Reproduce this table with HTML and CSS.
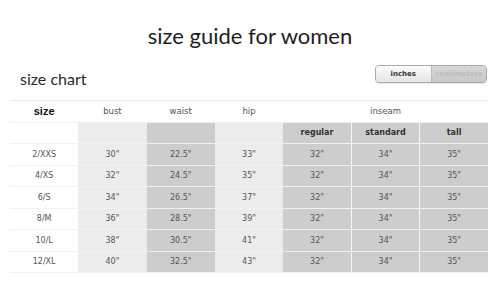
FILE: index.html
```html
<!DOCTYPE html>
<html lang="en">
<head>
  <meta charset="UTF-8" />
  <title>size guide for women</title>
  <link rel="stylesheet" href="styles.css">
</head>
<body>
  <h1 class="page-title">size guide for women</h1>

  <div class="chart-head">
    <h2>size chart</h2>
    <div class="unit-toggle">
      <span class="unit active">inches</span>
      <span class="unit">centimeters</span>
    </div>
  </div>

  <table class="size-table">
    <thead>
      <tr class="top-row">
        <th class="size-col">size</th>
        <th>bust</th>
        <th>waist</th>
        <th>hip</th>
        <th colspan="3">inseam</th>
      </tr>
      <tr class="sub-row">
        <td class="size-col"></td>
        <td class="light"></td>
        <td class="dark"></td>
        <td class="light"></td>
        <th class="dark">regular</th>
        <th class="dark">standard</th>
        <th class="dark">tall</th>
      </tr>
    </thead>
    <tbody>
      <tr><td class="size-col">2/XXS</td><td class="light">30"</td><td class="dark">22.5"</td><td class="light">33"</td><td class="dark">32"</td><td class="dark">34"</td><td class="dark">35"</td></tr>
      <tr><td class="size-col">4/XS</td><td class="light">32"</td><td class="dark">24.5"</td><td class="light">35"</td><td class="dark">32"</td><td class="dark">34"</td><td class="dark">35"</td></tr>
      <tr><td class="size-col">6/S</td><td class="light">34"</td><td class="dark">26.5"</td><td class="light">37"</td><td class="dark">32"</td><td class="dark">34"</td><td class="dark">35"</td></tr>
      <tr><td class="size-col">8/M</td><td class="light">36"</td><td class="dark">28.5"</td><td class="light">39"</td><td class="dark">32"</td><td class="dark">34"</td><td class="dark">35"</td></tr>
      <tr><td class="size-col">10/L</td><td class="light">38"</td><td class="dark">30.5"</td><td class="light">41"</td><td class="dark">32"</td><td class="dark">34"</td><td class="dark">35"</td></tr>
      <tr><td class="size-col">12/XL</td><td class="light">40"</td><td class="dark">32.5"</td><td class="light">43"</td><td class="dark">32"</td><td class="dark">34"</td><td class="dark">35"</td></tr>
    </tbody>
  </table>
</body>
</html>
```

FILE: styles.css
```css
body {
  margin: 0;
  background-color: #fff;
  color: #222;
  font-family: 'Lato', sans-serif;
  width: 500px;
  height: 287px;
  overflow: hidden;
}

/* Title */
.page-title {
  margin: 0;
  padding-top: 23px;
  font-size: 22px;
  font-weight: 400;
  line-height: 26px;
  text-align: center;
  color: #1e1e1e;
}

/* Chart heading + unit switch */
.chart-head {
  display: flex;
  justify-content: space-between;
  align-items: center;
  margin: 13px 13px 0 20px;
  height: 36px;
}

.chart-head h2 {
  margin: -4px 0 0;
  font-size: 16px;
  font-weight: 400;
  color: #2a2a2a;
}

.unit-toggle {
  display: flex;
  width: 110px;
  height: 16px;
  border: 1px solid #aaa;
  border-radius: 4px;
  overflow: hidden;
  margin-top: -12px;
  box-shadow: 0 1px 1px rgba(0,0,0,0.1);
}

.unit {
  flex: 1;
  font-family: 'DejaVu Sans', sans-serif;
  font-size: 7px;
  font-weight: 700;
  line-height: 16px;
  text-align: center;
  color: #bbb;
  background: linear-gradient(#d6d6d6, #c8c8c8);
}

.unit.active {
  color: #333;
  background: linear-gradient(#fbfbfb, #e4e4e4);
  border-right: 1px solid #bbb;
}

/* Table */
.size-table {
  margin: 2px 0 0 10px;
  width: 478px;
  border-collapse: collapse;
  table-layout: fixed;
  font-family: 'DejaVu Sans', 'Verdana', sans-serif;
  font-size: 8px;
  color: #555;
}

.size-table th,
.size-table td {
  height: 20.5px;
  padding: 0;
  text-align: center;
  border-bottom: 1px solid #f1f1f1;
}

.top-row th {
  border-top: 1px solid #eaeaea;
  font-weight: 400;
  font-size: 8.5px;
  color: #555;
}

.top-row .size-col {
  font-family: 'Liberation Sans', sans-serif;
  font-size: 11px;
  font-weight: 700;
  color: #111;
}

.sub-row th {
  font-weight: 700;
  color: #333;
}

.light {
  background-color: #ececec;
}

.dark {
  background-color: #cdcdcd;
}

.size-table td.dark + td.dark,
.size-table th.dark + th.dark {
  border-left: 1px solid #f6f6f6;
}
```
